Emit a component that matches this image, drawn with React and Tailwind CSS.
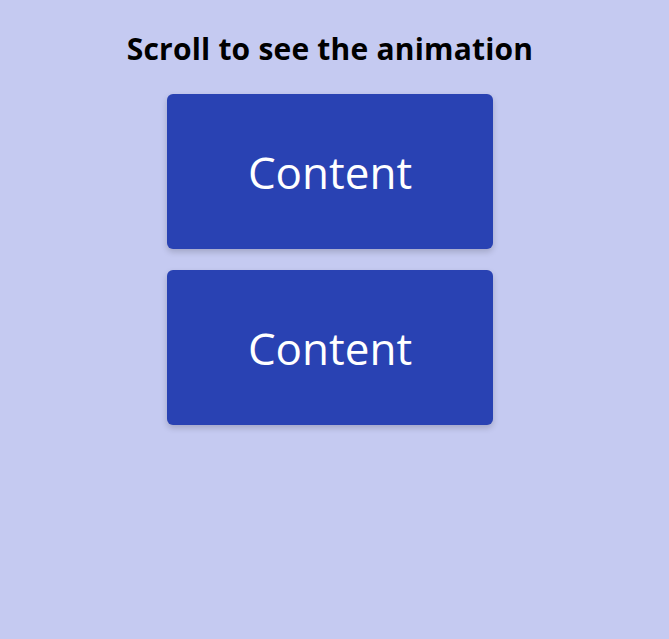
import React from 'react';

const Card = () => (
  <div className="w-[326px] h-[155px] rounded-md bg-[#2942b3] shadow-[0_3px_6px_rgba(0,0,0,0.18)] flex items-center justify-center">
    <span className="text-[44px] text-white leading-none">Content</span>
  </div>
);

const App = () => {
  return (
    <div className="min-h-[639px] bg-[#c5caf1] font-['Open_Sans','Noto_Sans',sans-serif]">
      <div className="w-[660px] flex flex-col items-center pt-[29px]">
        <h1 className="text-[30px] font-bold text-black leading-[40px] mb-[25px] tracking-[0.2px]">Scroll to see the animation</h1>
        <div className="flex flex-col gap-[21px]">
          <Card />
          <Card />
        </div>
      </div>
    </div>
  );
};

export default App;
